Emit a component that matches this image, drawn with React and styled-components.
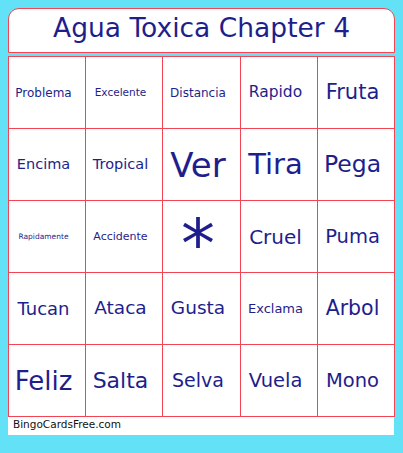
import styled, { createGlobalStyle } from 'styled-components';

const GlobalStyle = createGlobalStyle`
  html, body {
    margin: 0;
    padding: 0;
    background: #63e1f7;
  }
  body {
    font-family: "DejaVu Sans", Verdana, sans-serif;
  }
`;

const cells = [
  ['Problema', 12], ['Excelente', 10.5], ['Distancia', 12], ['Rapido', 15.5], ['Fruta', 21],
  ['Encima', 14.5], ['Tropical', 14.5], ['Ver', 34], ['Tira', 29], ['Pega', 23.5],
  ['Rapidamente', 7.5], ['Accidente', 11], ['*', 68, 14], ['Cruel', 20], ['Puma', 19.5],
  ['Tucan', 18], ['Ataca', 18.5], ['Gusta', 18.5], ['Exclama', 13], ['Arbol', 20.5],
  ['Feliz', 26], ['Salta', 22], ['Selva', 19], ['Vuela', 19.5], ['Mono', 19.5],
];

const Page = styled.div`
  padding: 8px;
  width: 387px;
`;

const Header = styled.div`
  box-sizing: border-box;
  height: 45px;
  padding-bottom: 7px;
  background: #fff;
  border: 1px solid #f24452;
  border-radius: 11px 11px 0 0;
  display: flex;
  align-items: center;
  justify-content: center;
  color: #1e1e8c;
  font-size: 26.5px;
`;

const Grid = styled.div`
  margin-top: 3px;
  display: grid;
  grid-template-columns: 77px 77px 78px 77px 77px;
  grid-auto-rows: 72px;
  background: #fff;
  border-top: 1px solid #f24452;
  border-left: 1px solid #f24452;
`;

const Cell = styled.div`
  border-right: 1px solid #f24452;
  border-bottom: 1px solid #f24452;
  display: flex;
  align-items: center;
  justify-content: center;
  padding: ${(p) => p.$shift || 0}px 7px 0 0;
  box-sizing: border-box;
  color: #1e1e8c;
  font-size: ${(p) => p.$size}px;
  line-height: 1;
  white-space: nowrap;
`;

const Footer = styled.div`
  height: 18px;
  background: #fff;
  margin-right: 1px;
  padding-left: 5px;
  font-size: 10.5px;
  color: #111;
  line-height: 15px;
`;

const App = () => {
  return (
    <>
      <GlobalStyle />
      <Page>
        <Header>Agua Toxica Chapter 4</Header>
        <Grid>
          {cells.map(([word, size, shift]) => (
            <Cell key={word} $size={size} $shift={shift}>
              {word}
            </Cell>
          ))}
        </Grid>
        <Footer>BingoCardsFree.com</Footer>
      </Page>
    </>
  );
};

export default App;
